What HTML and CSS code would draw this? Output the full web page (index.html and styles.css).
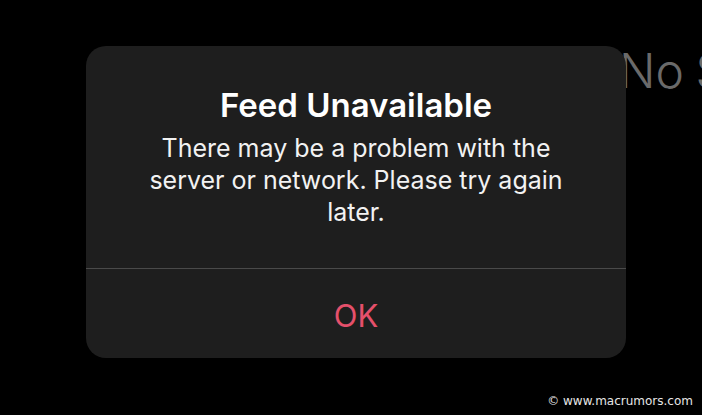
FILE: index.html
```html
<!DOCTYPE html>
<html lang="en">
<head>
    <meta charset="UTF-8">
    <meta name="viewport" content="width=device-width, initial-scale=1.0">
    <title>Feed Unavailable</title>
    <link rel="stylesheet" href="styles.css">
</head>
<body>
    <div class="screen">
        <div class="backdrop-title">No Stories</div>

        <div class="alert">
            <div class="alert-body">
                <h2>Feed Unavailable</h2>
                <p>There may be a problem with the server or network. Please try again later.</p>
            </div>
            <button class="alert-button">OK</button>
        </div>

        <div class="credit">© www.macrumors.com</div>
    </div>
</body>
</html>
```

FILE: styles.css
```css
body {
    margin: 0;
    padding: 0;
    background-color: #000;
    font-family: Inter, "Open Sans", sans-serif;
    overflow: hidden;
}

.screen {
    position: relative;
    width: 702px;
    height: 415px;
    padding: 46px 0 0 86px;
    box-sizing: border-box;
    overflow: hidden;
}

/* text of the page sitting under the alert */
.backdrop-title {
    position: absolute;
    left: 619px;
    top: 41px;
    font-size: 48px;
    font-weight: 300;
    word-spacing: -2px;
    color: #6a6a6a;
    white-space: nowrap;
}

.alert {
    position: relative;
    width: 540px;
    height: 312px;
    background-color: #1e1e1e;
    border-radius: 20px;
    display: flex;
    flex-direction: column;
    overflow: hidden;
}

.alert-body {
    height: 223px;
    border-bottom: 1px solid #4a4a4a;
    padding: 39px 50px 0;
    box-sizing: border-box;
    text-align: center;
}

.alert-body h2 {
    margin: 0 0 7px;
    font-size: 33px;
    font-weight: 600;
    color: #fff;
    line-height: 40px;
}

.alert-body p {
    margin: 0;
    font-size: 25px;
    line-height: 32px;
    color: #f2f2f2;
}

.alert-button {
    flex: 1;
    background: none;
    border: none;
    font-family: inherit;
    font-size: 31px;
    color: #e5506b;
    padding: 4px 0 0;
}

.credit {
    position: absolute;
    right: 9px;
    bottom: 7px;
    font-family: "DejaVu Sans", sans-serif;
    font-size: 12px;
    color: #e6e6e6;
}
```
